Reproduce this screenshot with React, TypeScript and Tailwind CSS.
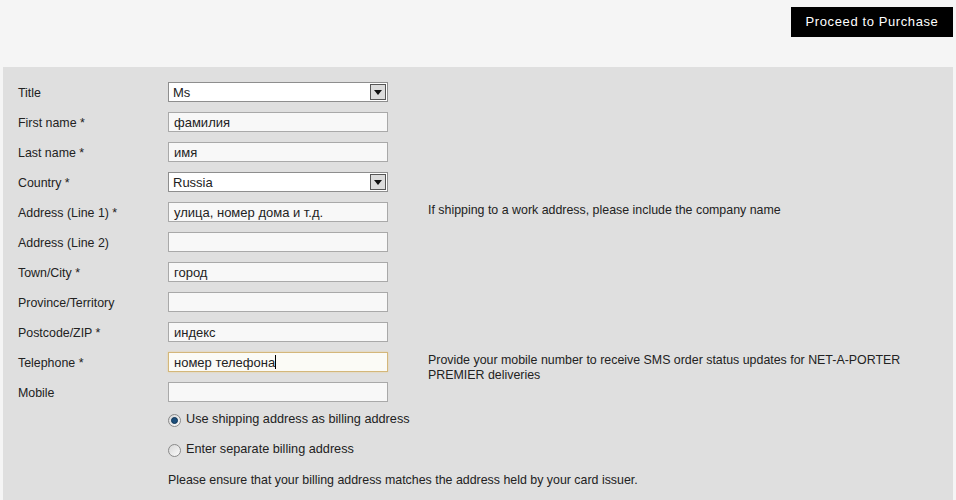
import React from 'react';

interface Field {
  label: string;
  value: string;
  kind: 'select' | 'input';
  note?: string;
  focused?: boolean;
}

const fields: Field[] = [
  { label: 'Title', value: 'Ms', kind: 'select' },
  { label: 'First name *', value: 'фамилия', kind: 'input' },
  { label: 'Last name *', value: 'имя', kind: 'input' },
  { label: 'Country *', value: 'Russia', kind: 'select' },
  {
    label: 'Address (Line 1) *',
    value: 'улица, номер дома и т.д.',
    kind: 'input',
    note: 'If shipping to a work address, please include the company name',
  },
  { label: 'Address (Line 2)', value: '', kind: 'input' },
  { label: 'Town/City *', value: 'город', kind: 'input' },
  { label: 'Province/Territory', value: '', kind: 'input' },
  { label: 'Postcode/ZIP *', value: 'индекс', kind: 'input' },
  {
    label: 'Telephone *',
    value: 'номер телефона',
    kind: 'input',
    focused: true,
    note: 'Provide your mobile number to receive SMS order status updates for NET-A-PORTER PREMIER deliveries',
  },
  { label: 'Mobile', value: '', kind: 'input' },
];

const Radio: React.FC<{ checked?: boolean }> = ({ checked }) => (
  <span className="w-[13px] h-[13px] rounded-full border border-[#8a8a8a] bg-gradient-to-br from-[#d8d8d8] to-[#fafafa] flex items-center justify-center">
    {checked && <span className="w-[7px] h-[7px] rounded-full bg-[#1d4f7c] border border-[#0d3558]" />}
  </span>
);

const App: React.FC = () => {
  return (
    <div className="w-[956px] h-[500px] bg-[#f5f5f5] overflow-hidden text-[12.4px] text-[#222] font-['Liberation_Sans',Arial,sans-serif]">
      {/* Header */}
      <div className="h-[67px] flex justify-end items-start pt-[7px] pr-[3px]">
        <button className="w-[162px] h-[30px] bg-black text-white text-[13px] tracking-[0.6px]">
          Proceed to Purchase
        </button>
      </div>

      {/* Form panel */}
      <div className="mx-[3px] h-[433px] bg-[#dfdfdf] pt-[15px]">
        {fields.map((f, i) => (
          <div key={i} className="flex h-[30px]">
            <div className="w-[165px] pl-[15px] pt-[4px] leading-[14px]">{f.label}</div>
            <div className="w-[260px] shrink-0">
              {f.kind === 'select' ? (
                <div className="w-[220px] h-[20px] bg-white border border-[#8e8e8e] flex items-center">
                  <span className="flex-1 pl-[4px] pt-[2px] text-[13px] leading-[18px]">{f.value}</span>
                  <span className="w-[16px] h-[16px] mr-[1px] bg-[#dcdcdc] border border-[#555] flex items-center justify-center">
                    <svg width="8" height="5" viewBox="0 0 8 5">
                      <path d="M0 0H8L4 5Z" fill="#111" />
                    </svg>
                  </span>
                </div>
              ) : (
                <div
                  className={
                    f.focused
                      ? 'w-[220px] h-[20px] bg-[#fbfbf6] border border-[#d4b77a] shadow-[0_0_2px_#e8d29e] flex items-center'
                      : 'w-[220px] h-[20px] bg-[#f8f8f8] border border-[#a9a9a9] flex items-center'
                  }
                >
                  <span className="pl-[5px] pt-[2px] text-[13px] leading-[18px]">{f.value}</span>
                  {f.focused && <span className="w-px h-[14px] bg-black" />}
                </div>
              )}
            </div>
            {f.note && (
              <div className="w-[480px] mt-[1px] leading-[15px]">{f.note}</div>
            )}
          </div>
        ))}

        <div className="pl-[165px] mt-[-7px]">
          <div className="flex items-center gap-[5px] h-[30px]">
            <Radio checked />
            <span className="text-[12.7px]">Use shipping address as billing address</span>
          </div>
          <div className="flex items-center gap-[5px] h-[30px]">
            <Radio />
            <span className="text-[12.7px]">Enter separate billing address</span>
          </div>
          <div className="h-[30px] flex items-center">
            Please ensure that your billing address matches the address held by your card issuer.
          </div>
        </div>
      </div>
    </div>
  );
};

export default App;
